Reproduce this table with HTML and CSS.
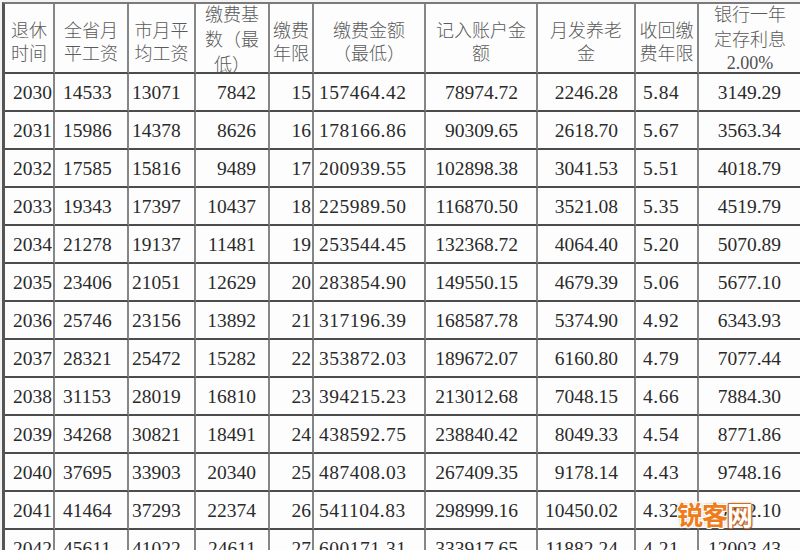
FILE: index.html
```html
<!DOCTYPE html>
<html lang="zh-CN">
<head>
<meta charset="utf-8">
<title>养老金测算表</title>
<link rel="stylesheet" href="styles.css">
</head>
<body>
<div class="page">
  <div class="sheet">
    <div class="h h2">退休<br>时间</div>
    <div class="h h2">全省月<br>平工资</div>
    <div class="h h2">市月平<br>均工资</div>
    <div class="h h3">缴费基<br>数（最<br>低）</div>
    <div class="h h2">缴费<br>年限</div>
    <div class="h h2">缴费金额<br>（最低）</div>
    <div class="h h2">记入账户金<br>额</div>
    <div class="h h2">月发养老<br>金</div>
    <div class="h h2">收回缴<br>费年限</div>
    <div class="h h3">银行一年<br>定存利息<br><span class="num">2.00%</span></div>

    <div class="c c1">2030</div><div class="c c2">14533</div><div class="c c3">13071</div><div class="c c4">7842</div><div class="c c5">15</div><div class="c c6">157464.42</div><div class="c c7">78974.72</div><div class="c c8">2246.28</div><div class="c c9">5.84</div><div class="c c10">3149.29</div>
    <div class="c c1">2031</div><div class="c c2">15986</div><div class="c c3">14378</div><div class="c c4">8626</div><div class="c c5">16</div><div class="c c6">178166.86</div><div class="c c7">90309.65</div><div class="c c8">2618.70</div><div class="c c9">5.67</div><div class="c c10">3563.34</div>
    <div class="c c1">2032</div><div class="c c2">17585</div><div class="c c3">15816</div><div class="c c4">9489</div><div class="c c5">17</div><div class="c c6">200939.55</div><div class="c c7">102898.38</div><div class="c c8">3041.53</div><div class="c c9">5.51</div><div class="c c10">4018.79</div>
    <div class="c c1">2033</div><div class="c c2">19343</div><div class="c c3">17397</div><div class="c c4">10437</div><div class="c c5">18</div><div class="c c6">225989.50</div><div class="c c7">116870.50</div><div class="c c8">3521.08</div><div class="c c9">5.35</div><div class="c c10">4519.79</div>
    <div class="c c1">2034</div><div class="c c2">21278</div><div class="c c3">19137</div><div class="c c4">11481</div><div class="c c5">19</div><div class="c c6">253544.45</div><div class="c c7">132368.72</div><div class="c c8">4064.40</div><div class="c c9">5.20</div><div class="c c10">5070.89</div>
    <div class="c c1">2035</div><div class="c c2">23406</div><div class="c c3">21051</div><div class="c c4">12629</div><div class="c c5">20</div><div class="c c6">283854.90</div><div class="c c7">149550.15</div><div class="c c8">4679.39</div><div class="c c9">5.06</div><div class="c c10">5677.10</div>
    <div class="c c1">2036</div><div class="c c2">25746</div><div class="c c3">23156</div><div class="c c4">13892</div><div class="c c5">21</div><div class="c c6">317196.39</div><div class="c c7">168587.78</div><div class="c c8">5374.90</div><div class="c c9">4.92</div><div class="c c10">6343.93</div>
    <div class="c c1">2037</div><div class="c c2">28321</div><div class="c c3">25472</div><div class="c c4">15282</div><div class="c c5">22</div><div class="c c6">353872.03</div><div class="c c7">189672.07</div><div class="c c8">6160.80</div><div class="c c9">4.79</div><div class="c c10">7077.44</div>
    <div class="c c1">2038</div><div class="c c2">31153</div><div class="c c3">28019</div><div class="c c4">16810</div><div class="c c5">23</div><div class="c c6">394215.23</div><div class="c c7">213012.68</div><div class="c c8">7048.15</div><div class="c c9">4.66</div><div class="c c10">7884.30</div>
    <div class="c c1">2039</div><div class="c c2">34268</div><div class="c c3">30821</div><div class="c c4">18491</div><div class="c c5">24</div><div class="c c6">438592.75</div><div class="c c7">238840.42</div><div class="c c8">8049.33</div><div class="c c9">4.54</div><div class="c c10">8771.86</div>
    <div class="c c1">2040</div><div class="c c2">37695</div><div class="c c3">33903</div><div class="c c4">20340</div><div class="c c5">25</div><div class="c c6">487408.03</div><div class="c c7">267409.35</div><div class="c c8">9178.14</div><div class="c c9">4.43</div><div class="c c10">9748.16</div>
    <div class="c c1">2041</div><div class="c c2">41464</div><div class="c c3">37293</div><div class="c c4">22374</div><div class="c c5">26</div><div class="c c6">541104.83</div><div class="c c7">298999.16</div><div class="c c8">10450.02</div><div class="c c9">4.32</div><div class="c c10">10822.10</div>
    <div class="c c1">2042</div><div class="c c2">45611</div><div class="c c3">41022</div><div class="c c4">24611</div><div class="c c5">27</div><div class="c c6">600171.31</div><div class="c c7">333917.65</div><div class="c c8">11882.24</div><div class="c c9">4.21</div><div class="c c10">12003.43</div>
  </div>
  <div class="watermark"><span class="wm-o">锐客</span><span class="wm-w">网</span></div>
</div>
</body>
</html>
```

FILE: styles.css
```css
html, body {
  margin: 0;
  padding: 0;
  overflow: hidden;
  width: 800px;
  height: 550px;
  background: #f3f3f3;
}

.page {
  position: relative;
  width: 800px;
  height: 550px;
  overflow: hidden;
}

.sheet {
  display: grid;
  grid-template-columns: 50px 74px 67px 74px 44px 112px 112px 98px 63px 104px;
  grid-template-rows: 70px;
  grid-auto-rows: 38px;
  width: max-content;
  margin: 2px 0 0 2px;
  border-top: 2px solid #7a7a7a;
  border-left: 3px solid #555;
  font-family: "Liberation Serif", "Noto Sans CJK SC", serif;
}

.h, .c {
  box-sizing: border-box;
  border-right: 2px solid #868686;
  border-bottom: 2px solid #4c4c4c;
  background: #fdfdfd;
  overflow: hidden;
  white-space: nowrap;
}

.h {
  display: flex;
  flex-direction: column;
  justify-content: center;
  align-items: center;
  text-align: center;
  font-family: "Noto Sans CJK SC", sans-serif;
  font-weight: 300;
  font-size: 18px;
  color: #5a5a5a;
}

.h2 {
  line-height: 23px;
  padding-top: 5px;
}

.h3 {
  line-height: 25px;
}

.num {
  font-family: "Liberation Serif", serif;
  font-weight: 400;
  font-size: 18px;
  color: #505050;
}

.c {
  display: flex;
  align-items: center;
  font-size: 19.5px;
  color: #2a2a2a;
  padding-top: 1px;
}

.c1 { justify-content: flex-end; padding-right: 1px; }
.c2 { justify-content: flex-start; padding-left: 8px; }
.c3 { justify-content: flex-start; padding-left: 3px; }
.c4 { justify-content: flex-end; padding-right: 12px; }
.c5 { justify-content: flex-end; padding-right: 1px; }
.c6 { justify-content: flex-start; padding-left: 5px; letter-spacing: 0.5px; }
.c7 { justify-content: flex-end; padding-right: 18px; }
.c8 { justify-content: flex-end; padding-right: 16px; }
.c9 { justify-content: flex-start; padding-left: 7px; letter-spacing: 0.5px; }
.c10 { justify-content: flex-end; padding-right: 20px; }

.watermark {
  position: absolute;
  left: 677px;
  top: 498px;
  font-family: "Noto Sans CJK SC", sans-serif;
  font-weight: 700;
  font-size: 26px;
  line-height: 32px;
  letter-spacing: -1px;
}

.wm-o {
  color: #ee7c1c;
  text-shadow: 1px 0 0 #fff, -1px 0 0 #fff, 0 1px 0 #fff, 0 -1px 0 #fff,
    1px 1px 0 #fff, -1px -1px 0 #fff, 1px -1px 0 #fff, -1px 1px 0 #fff,
    0 0 3px #666;
}

.wm-w {
  color: #fff;
  text-shadow: 1px 0 0 #d86a18, -1px 0 0 #d86a18, 0 1px 0 #d86a18, 0 -1px 0 #d86a18,
    1px 1px 0 #555, -1px -1px 0 #777, 0 0 3px #444;
}
```
